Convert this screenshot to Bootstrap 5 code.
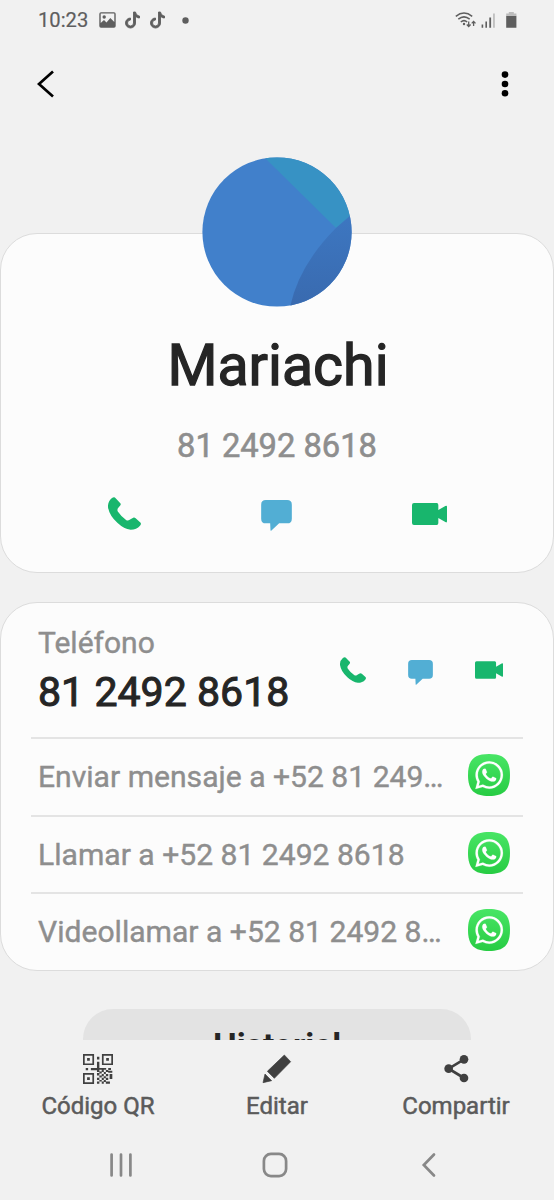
<!DOCTYPE html>
<html lang="es">
<head>
<meta charset="utf-8">
<meta name="viewport" content="width=device-width, initial-scale=1">
<title>Mariachi</title>
<link href="https://cdn.jsdelivr.net/npm/bootstrap@5.3.0/dist/css/bootstrap.min.css" rel="stylesheet">
<style>
body{background:#f1f1f1;font-family:Roboto,"Liberation Sans",sans-serif;color:#252525;height:1200px;overflow:hidden}
svg{display:block;flex:none}
.content-area{height:1040px}
.status-bar{height:40px;padding:0 37px 0 38px;color:#5e5e5e}
.clock{font-size:20.2px;line-height:40px;width:60.5px;-webkit-text-stroke:.2px}
.second-note{margin-left:8.5px}
.more-dot{margin-left:15.5px}
.app-bar{height:88px;padding:0 45px 1px 37px}
.panel{background:#fcfcfc;border:1px solid #dcdcdc;border-radius:37px}
.profile{margin-top:105px;height:340px}
.avatar{margin-top:-77px}
.person{font-size:57.3px;line-height:68px;margin-top:25px;padding-left:2px;-webkit-text-stroke:1.3px}
.main-number{font-size:32.7px;line-height:40px;margin-top:26px;color:#8e8e8e;-webkit-text-stroke:.6px}
.main-actions{width:458px;margin-top:30px}
.phone-panel{margin-top:29px;height:369px;padding:0 30px}
.phone-head{height:134px;padding-left:7px}
.kind{font-size:30px;line-height:36px;margin-top:22px;color:#8e8e8e;-webkit-text-stroke:.4px}
.number{font-size:41.1px;line-height:48px;margin-top:7px;-webkit-text-stroke:1px;white-space:nowrap}
.small-actions{width:204px;height:134px}
.app-row{height:77.6px;border-top:2px solid #e4e4e4;padding-left:7px}
.app-text{font-size:30.1px;color:#8e8e8e;white-space:nowrap;-webkit-text-stroke:.4px}
.app-icon{width:68px;padding:0 1px 3px 0}
.history{width:388px;height:76px;margin-top:38px;border-radius:30px;background:#e3e3e3;font-size:33.7px;line-height:40px;padding-top:17px;font-weight:700}
.bottom-bar{height:88px;width:537px;color:#5b5b5b;font-size:24px;line-height:30px;-webkit-text-stroke:.5px}
.bottom-icon{height:51px;padding-top:14px}
.nav-keys{height:73px;width:465px;padding-right:3px}
.green{fill:#18b66d}.blue{fill:#52aed4}
</style>
</head>
<body>
<svg width="0" height="0" class="position-absolute" aria-hidden="true">
<defs>
<linearGradient id="wa-bg" x2="0" y2="1"><stop stop-color="#48e565"/><stop offset="1" stop-color="#27cc43"/></linearGradient>
<symbol id="call" viewBox="54 50 99 98"><path d="M72 50Q75 50 77 53L91 68Q94 71 90 76L85 82Q80 87 84 94Q94 109 109 119Q114 122 119 118L127 113Q132 109 137 113L151 126Q155 130 150 136Q140 148 122 148Q102 146 82 127Q58 105 54 80Q53 63 65 53Q69 50 72 50Z"/></symbol>
<symbol id="chat" viewBox="515 62 92 93"><path d="M529 62H593Q607 62 607 76V118Q607 132 593 132H569L545 154Q543 155 543 153L542 132H529Q515 132 515 118V76Q515 62 529 62Z"/></symbol>
<symbol id="video" viewBox="966 66 105 66"><path d="M972 66H1040Q1045 66 1045 72V87L1066 75Q1071 72 1071 77V121Q1071 126 1066 123L1045 111V126Q1045 132 1040 132H972Q966 132 966 126V72Q966 66 972 66Z"/></symbol>
<symbol id="tiktok" viewBox="-.5 -.5 17 17"><path stroke="currentColor" stroke-width=".9" d="M9 0h1.98c.144.715.54 1.617 1.235 2.512C12.895 3.389 13.797 4 15 4v2c-1.753 0-3.07-.814-4-1.829V11a5 5 0 1 1-5-5v2a3 3 0 1 0 3 3z" fill="currentColor"/></symbol>
<symbol id="whatsapp" viewBox="0 0 42 42"><path fill="url(#wa-bg)" d="M21 0C36 0 42 6 42 21S36 42 21 42 0 36 0 21 6 0 21 0Z"/><path fill="#fff" stroke="#fff" stroke-width=".1" transform="translate(7.4 7.3) scale(1.73)" d="M13.601 2.326A7.85 7.85 0 0 0 7.994 0C3.627 0 .068 3.558.064 7.926c0 1.399.366 2.76 1.057 3.965L0 16l4.204-1.102a7.9 7.9 0 0 0 3.79.965h.004c4.368 0 7.926-3.558 7.93-7.93A7.9 7.9 0 0 0 13.6 2.326zM7.994 14.521a6.6 6.6 0 0 1-3.356-.92l-.24-.144-2.494.654.666-2.433-.156-.251a6.56 6.56 0 0 1-1.007-3.505c0-3.626 2.957-6.584 6.591-6.584a6.56 6.56 0 0 1 4.66 1.931 6.56 6.56 0 0 1 1.928 4.66c-.004 3.639-2.961 6.592-6.592 6.592m3.615-4.934c-.197-.099-1.17-.578-1.353-.646-.182-.065-.315-.099-.445.099-.133.197-.513.646-.627.775-.114.133-.232.148-.43.05-.197-.1-.836-.308-1.592-.985-.59-.525-.985-1.175-1.103-1.372-.114-.198-.011-.304.088-.403.087-.088.197-.232.296-.346.1-.114.133-.198.198-.33.065-.134.034-.248-.015-.347-.05-.099-.445-1.076-.612-1.47-.16-.389-.323-.335-.445-.34-.114-.007-.247-.007-.38-.007a.73.73 0 0 0-.529.247c-.182.198-.691.677-.691 1.654s.71 1.916.81 2.049c.098.133 1.394 2.132 3.383 2.992.47.205.84.326 1.129.418.475.152.904.129 1.246.08.38-.058 1.171-.48 1.338-.943.164-.464.164-.86.114-.985s-.182-.209-.38-.309"/></symbol>
</defs>
</svg>

<div class="content-area overflow-hidden d-flex flex-column">
  <header class="status-bar flex-shrink-0 d-flex align-items-center justify-content-between">
    <div class="d-flex align-items-center">
      <span class="clock">10:23</span>
      <svg width="17" height="16" viewBox="0 0 17 16"><path fill="#5e5e5e" fill-rule="evenodd" d="M2 .3H15Q16.7.3 16.7 2V14Q16.7 15.7 15 15.7H2Q.3 15.7.3 14V2Q.3.3 2 .3ZM1.700 1.600V11L5 8 7.500 10.500 11.300 6 15.300 10V1.600Z"/><circle cx="5.200" cy="5" r="1.700" fill="#5e5e5e"/></svg>
      <svg width="17" height="18" class="ms-2"><use href="#tiktok"/></svg>
      <svg width="17" height="18" class="second-note"><use href="#tiktok"/></svg>
      <svg width="7" height="7" viewBox="0 0 7 7" class="more-dot"><circle cx="3.500" cy="3.500" r="3.200" fill="#5e5e5e"/></svg>
    </div>
    <svg width="62" height="18" viewBox="455 11 62 18"><g fill="none" stroke="#5e5e5e" stroke-width="1.5"><path d="M455.800 16.300Q464 9.800 472.200 16.300M458.300 19.200Q464 14.500 469.700 19.200M460.800 22Q464 19.300 467.200 22"/><path stroke-width="1.3" d="M468.700 21.500V26.500M466.800 24.500L468.700 26.500 470.600 24.500M473.600 26V21.500M471.700 23.400L473.600 21.400 475.500 23.400"/></g><circle cx="464" cy="24" r="1.2" fill="#5e5e5e"/><path fill="#5e5e5e" d="M481.600 24.500h1.600v3.200h-1.600zM485.400 21.500h1.600v6.200h-1.600zM489.300 17.500h1.800v10.200h-1.800zM506.200 15.800h10.200v12h-10.200z"/><path fill="#bcbcbc" d="M493.100 13.500h1.700v14.200h-1.700zM508.800 12h5v1.500h2.600v2.300h-10.200v-2.300h2.600z"/></svg>
  </header>
  <div class="app-bar flex-shrink-0 d-flex align-items-center justify-content-between">
    <svg width="18" height="28" viewBox="0 0 18 28"><path d="M16 1.500 2 14 16 26.500" fill="none" stroke="#000" stroke-width="2.700"/></svg>
    <svg width="8" height="26" viewBox="0 0 8 26"><circle cx="4" cy="3.600" r="3.300"/><circle cx="4" cy="13" r="3.300"/><circle cx="4" cy="22.300" r="3.300"/></svg>
  </div>

  <section class="panel profile flex-shrink-0 d-flex flex-column align-items-center">
    <svg class="avatar" width="150" height="150" viewBox="0 0 150 150"><defs><clipPath id="disc"><circle cx="75" cy="75" r="74.6"/></clipPath><linearGradient id="dusk" x2="0" y2="1"><stop stop-color="#3d77c1"/><stop offset="1" stop-color="#396aaf"/></linearGradient></defs><g clip-path="url(#disc)"><path fill="#4180cb" d="M0 0h150v150H0z"/><path fill="#3792c4" d="M62 0 134 71 150 58V0z"/><path fill="url(#dusk)" d="M150 57 134 71Q97 108 88 150H150Z"/></g></svg>
    <div class="person">Mariachi</div>
    <div class="main-number">81 2492 8618</div>
    <div class="main-actions row g-0 align-items-center">
      <div class="col-4 d-flex justify-content-center"><svg class="green" width="33" height="33"><use href="#call"/></svg></div>
      <div class="col-4 d-flex justify-content-center"><svg class="blue mt-1" width="31" height="31"><use href="#chat"/></svg></div>
      <div class="col-4 d-flex justify-content-center"><svg class="green" width="35" height="22"><use href="#video"/></svg></div>
    </div>
  </section>

  <section class="panel phone-panel flex-shrink-0">
    <div class="phone-head d-flex justify-content-between">
      <div>
        <div class="kind">Teléfono</div>
        <div class="number">81 2492 8618</div>
      </div>
      <div class="small-actions row g-0 align-items-center">
        <div class="col-4 d-flex justify-content-center"><svg class="green" width="26" height="26"><use href="#call"/></svg></div>
        <div class="col-4 d-flex justify-content-center"><svg class="blue mt-1" width="25" height="25"><use href="#chat"/></svg></div>
        <div class="col-4 d-flex justify-content-center"><svg class="green" width="28" height="18"><use href="#video"/></svg></div>
      </div>
    </div>
    <div class="app-row d-flex align-items-center justify-content-between"><span class="app-text">Enviar mensaje a +52 81 249…</span><span class="app-icon d-flex justify-content-center"><svg width="42" height="42"><use href="#whatsapp"/></svg></span></div>
    <div class="app-row d-flex align-items-center justify-content-between"><span class="app-text">Llamar a +52 81 2492 8618</span><span class="app-icon d-flex justify-content-center"><svg width="42" height="42"><use href="#whatsapp"/></svg></span></div>
    <div class="app-row d-flex align-items-center justify-content-between"><span class="app-text">Videollamar a +52 81 2492 8…</span><span class="app-icon d-flex justify-content-center"><svg width="42" height="42"><use href="#whatsapp"/></svg></span></div>
  </section>

  <div class="history flex-shrink-0 align-self-center text-center">Historial</div>
</div>

<nav class="bottom-bar row g-0 mx-auto text-center">
  <div class="col-4"><div class="bottom-icon d-flex justify-content-center">
    <svg width="30" height="30" viewBox="0 0 88 88"><g fill="none" stroke="#404040" stroke-width="5"><path d="M2.500 2.500H30V30H2.500ZM58 2.500H85.500V30H58ZM2.500 58H30V85.500H2.500Z"/></g><path fill="#404040" d="M12 12h8v8h-8zM68 12h8v8h-8zM12 68h8v8h-8zM41 8h7v8h-7zM41 23h7v18h-7zM8 41h7v7H8zM23 41h18v7H23zM41 41h7v12h-7zM48 41h20v5H48zM74 41h8v6h-8zM55 46h6v7h-6zM67 47h7v6h-7zM41 56h7v7h-7zM48 51h7v6h-7zM61 53h6v6h-6zM74 49h12v6H74zM55 59h6v6h-6zM67 59h7v6h-7zM48 63h7v6h-7zM61 65h6v6h-6zM78 59h8v14h-8zM41 70h7v6h-7zM55 70h6v6h-6zM67 70h7v6h-7zM48 76h7v5h-7zM61 76h6v6h-6zM41 81h7v6h-7zM55 81h6v6h-6zM67 81h12v6H67z"/></svg></div>Código QR</div>
  <div class="col-4"><div class="bottom-icon d-flex justify-content-center">
    <svg width="30" height="30" viewBox="726 43 90 90"><path fill="#404040" stroke="#404040" stroke-width="2" stroke-linejoin="round" d="M793 46 812 66 763 116 742 95ZM735 103 755 123 729 129Z"/></svg></div>Editar</div>
  <div class="col-4"><div class="bottom-icon d-flex justify-content-center">
    <svg width="26" height="30" viewBox="429 43 78 90"><path d="M492 59 446 87 492 115" fill="none" stroke="#404040" stroke-width="8"/><g fill="#404040"><circle cx="446" cy="87" r="13"/><circle cx="492" cy="59" r="13"/><circle cx="492" cy="115" r="13"/></g></svg></div>Compartir</div>
</nav>
<div class="nav-keys row g-0 mx-auto align-items-center">
  <div class="col-4 d-flex justify-content-center"><svg width="24" height="26" viewBox="0 0 24 26"><path d="M2.600 2.500V23.500M12 2.500V23.500M21.400 2.500V23.500" stroke="#888" stroke-width="2.700" stroke-linecap="round"/></svg></div>
  <div class="col-4 d-flex justify-content-center"><svg width="26" height="26" viewBox="0 0 26 26"><rect x="1.900" y="1.900" width="22.200" height="22.200" rx="7" fill="none" stroke="#888" stroke-width="2.700"/></svg></div>
  <div class="col-4 d-flex justify-content-center"><svg width="16" height="26" viewBox="0 0 16 26"><path d="M13 2.500 2.800 13 13 23.500" fill="none" stroke="#888" stroke-width="2.700" stroke-linecap="round"/></svg></div>
</div>
<script src="https://cdn.jsdelivr.net/npm/bootstrap@5.3.0/dist/js/bootstrap.bundle.min.js"></script>
</body>
</html>
